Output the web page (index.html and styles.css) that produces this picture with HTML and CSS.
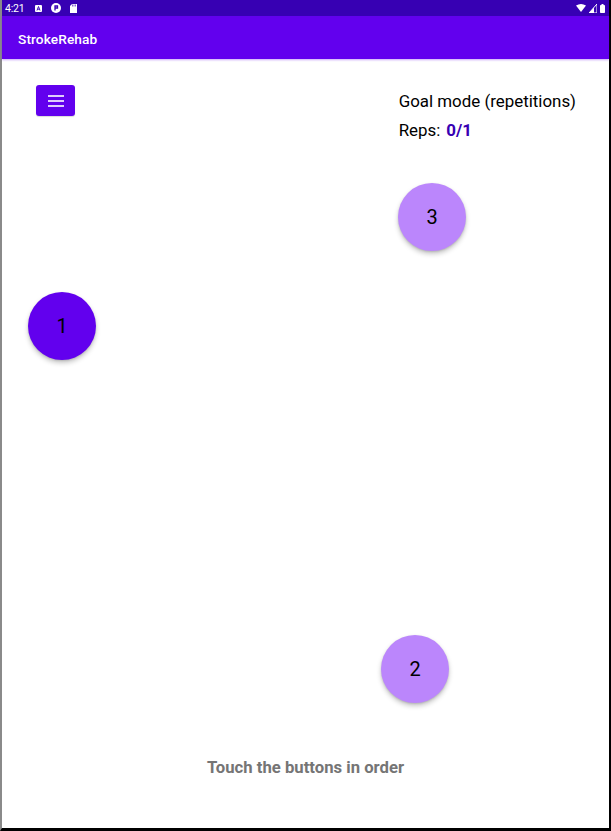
FILE: index.html
```html
<!DOCTYPE html>
<html>
<head>
<meta charset="utf-8">
<link rel="stylesheet" href="styles.css">
</head>
<body>
<div class="screen">
  <div class="status-bar">
    <div class="status-left">
      <span class="time">4:21</span>
      <svg class="sicon" width="7" height="7" viewBox="0 0 7 7"><rect x="0" y="0" width="7" height="7" rx="1" fill="#fff"/><path d="M2 5.5 L3.5 1.5 L5 5.5 M2.5 4.2 H4.5" stroke="#3700B3" stroke-width="0.9" fill="none"/></svg>
      <svg class="sicon" width="10" height="10" viewBox="0 0 10 10"><circle cx="5" cy="5" r="5" fill="#fff"/><path d="M4 7.5 V3 H6.5 V5 H4.5" stroke="#3700B3" stroke-width="1.3" fill="none"/></svg>
      <svg class="sicon" width="7" height="9" viewBox="0 0 7 9"><path d="M2 0 H7 V9 H0 V2 Z" fill="#fff"/><path d="M2.5 0.5 V2.5 M4 0.5 V2.5 M5.5 0.5 V2.5" stroke="#3700B3" stroke-width="0.6"/></svg>
    </div>
    <div class="status-right">
      <svg width="10" height="8" viewBox="0 0 10 8"><path d="M0 1.5 Q5 -1.5 10 1.5 L5 8 Z" fill="#fff"/></svg>
      <svg width="8" height="9" viewBox="0 0 8 9"><path d="M8 0 V9 H0 Z" fill="none" stroke="#fff" stroke-width="1"/><path d="M5 3.5 V9 H0 Z" fill="#fff"/></svg>
      <svg width="5" height="9" viewBox="0 0 5 9"><rect x="0" y="1" width="5" height="8" rx="0.8" fill="#fff"/><rect x="1.5" y="0" width="2" height="1.2" fill="#fff"/></svg>
    </div>
  </div>
  <div class="app-bar"><span class="app-title">StrokeRehab</span></div>
  <main class="content">
    <div class="top-row">
      <button class="menu-btn" aria-label="menu">
        <span class="bar"></span><span class="bar"></span><span class="bar"></span>
      </button>
      <div class="goal">
        <div class="goal-title">Goal mode (repetitions)</div>
        <div class="reps"><span>Reps:</span><span class="reps-val">0/1</span></div>
      </div>
    </div>
    <div class="canvas">
      <div class="target active" style="left:26px; top:233px;">1</div>
      <div class="target" style="left:379px; top:576px;">2</div>
      <div class="target" style="left:396px; top:124px;">3</div>
    </div>
    <div class="hint">Touch the buttons in order</div>
  </main>
</div>
</body>
</html>
```

FILE: styles.css
```css
html, body {
  margin: 0;
  padding: 0;
  width: 611px;
  height: 831px;
  overflow: hidden;
  background: #fff;
  font-family: Roboto, "Noto Sans", Arial, sans-serif;
}

.screen {
  box-sizing: border-box;
  width: 611px;
  height: 831px;
  border-left: 2px solid #8a8a8a;
  border-right: 2px solid #000;
  border-bottom: 3px solid #000;
  display: flex;
  flex-direction: column;
}

.status-bar {
  height: 16px;
  background: #3700B3;
  display: flex;
  align-items: center;
  justify-content: space-between;
  padding: 0 4px 0 3px;
  color: #fff;
}

.status-left, .status-right {
  display: flex;
  align-items: center;
}

.status-left { gap: 9px; }
.status-right { gap: 3px; }

.time {
  font-size: 10.5px;
  letter-spacing: -0.2px;
  margin-right: 2px;
}

.app-bar {
  height: 43px;
  background: #6200EE;
  display: flex;
  align-items: center;
  padding-left: 16px;
  box-shadow: 0 1px 2px rgba(98, 0, 238, 0.35);
  position: relative;
  z-index: 1;
}

.app-title {
  color: #fff;
  font-size: 13.7px;
  font-weight: 500;
  letter-spacing: 0.1px;
  padding-top: 3px;
}

.content {
  flex: 1;
  display: flex;
  flex-direction: column;
  position: relative;
}

.top-row {
  display: flex;
  justify-content: space-between;
  align-items: flex-start;
  padding: 26px 33px 0 34px;
  position: relative;
  z-index: 1;
}

.menu-btn {
  width: 39px;
  height: 31px;
  border: none;
  border-radius: 3px;
  background: #6200EE;
  display: flex;
  flex-direction: column;
  align-items: center;
  justify-content: center;
  gap: 3px;
  padding: 0;
  box-shadow: 0 1px 1px rgba(0,0,0,0.15);
}

.menu-btn .bar {
  width: 16px;
  height: 2px;
  background: rgba(255,255,255,0.8);
}

.goal {
  font-size: 16.9px;
  color: #000;
  padding-top: 6px;
}

.goal-title {
  line-height: 20px;
}

.reps {
  display: flex;
  gap: 6px;
  margin-top: 9px;
  line-height: 20px;
}

.reps-val {
  color: #3700B3;
  font-weight: 700;
}

/* free canvas covering the content area; targets are placed by coordinates */
.canvas {
  position: absolute;
  inset: 0;
}

.target {
  position: absolute;
  width: 68px;
  height: 68px;
  border-radius: 50%;
  background: #BB86FC;
  color: #000;
  font-size: 20px;
  display: flex;
  align-items: center;
  justify-content: center;
  box-shadow: 0 3px 5px rgba(0,0,0,0.22), 0 1px 2px rgba(0,0,0,0.12);
}

.target.active {
  background: #6200EE;
}

.hint {
  margin-top: auto;
  text-align: center;
  font-size: 16.7px;
  font-weight: 700;
  color: #757575;
  padding: 0 0 50px 0;
  line-height: 20px;
}
```
